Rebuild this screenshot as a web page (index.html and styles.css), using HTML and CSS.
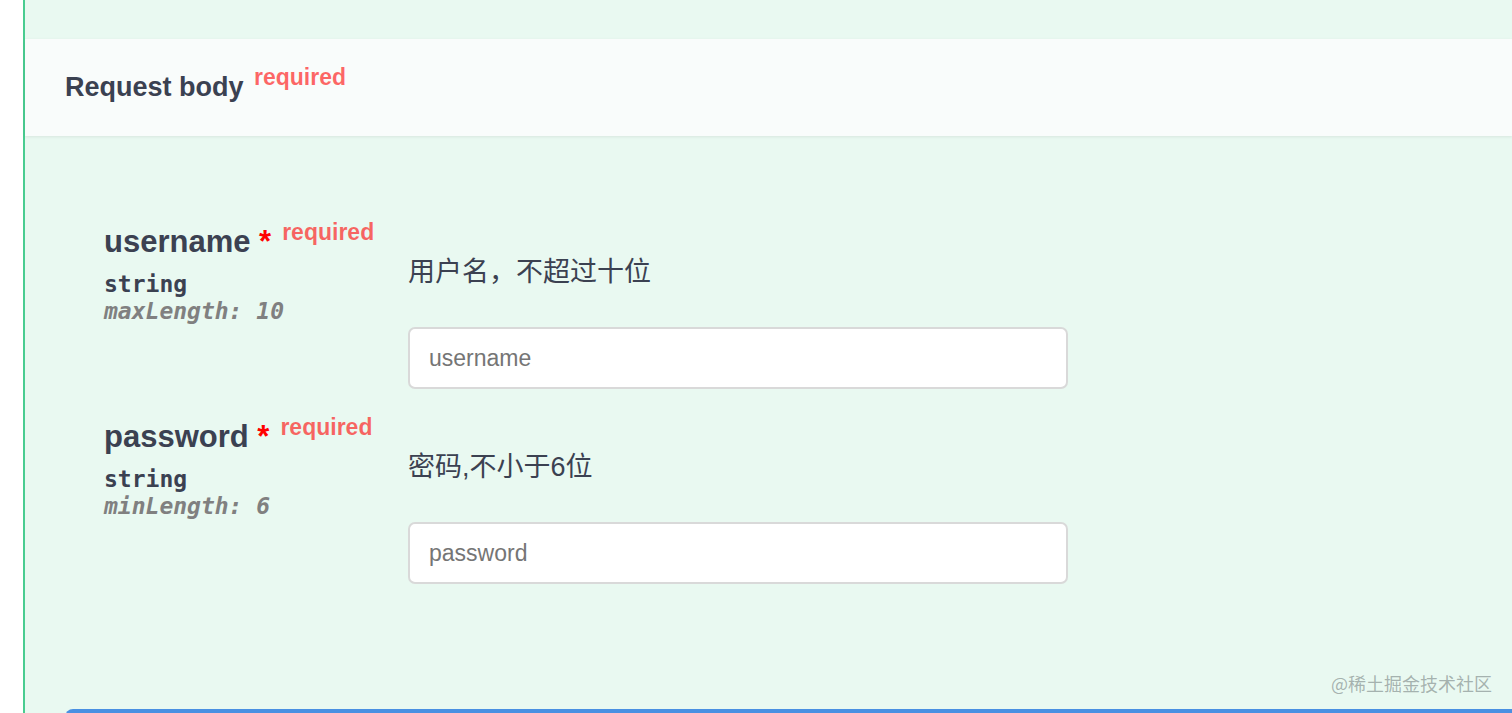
FILE: index.html
```html
<!DOCTYPE html>
<html lang="zh-CN">
<head>
    <meta charset="UTF-8">
    <meta name="viewport" content="width=device-width, initial-scale=1.0">
    <title>Request body</title>
    <link rel="stylesheet" href="styles.css">
</head>
<body>
    <div class="page">
        <div class="opblock">
            <div class="section-header">
                <h4>Request body <span class="header-required">required</span></h4>
            </div>

            <div class="body-params">
                <div class="param-row">
                    <div class="param-info">
                        <div class="param-name">username<span class="star"> *</span><span class="name-required">required</span></div>
                        <div class="param-type">string</div>
                        <div class="param-ext">maxLength: 10</div>
                    </div>
                    <div class="param-desc">
                        <p>用户名，不超过十位</p>
                        <input type="text" placeholder="username">
                    </div>
                </div>

                <div class="param-row">
                    <div class="param-info">
                        <div class="param-name">password<span class="star"> *</span><span class="name-required">required</span></div>
                        <div class="param-type">string</div>
                        <div class="param-ext">minLength: 6</div>
                    </div>
                    <div class="param-desc">
                        <p>密码,不小于6位</p>
                        <input type="text" placeholder="password">
                    </div>
                </div>
            </div>

            <div class="execute-bar"></div>
        </div>
    </div>

    <div class="watermark">@稀土掘金技术社区</div>
</body>
</html>
```

FILE: styles.css
```css
* {
    margin: 0;
    padding: 0;
    box-sizing: border-box;
}

body {
    background-color: #ffffff;
    font-family: "Liberation Sans", Arial, "Noto Sans CJK SC", sans-serif;
    color: #3b4151;
    overflow: hidden;
}

.page {
    padding-left: 23px;
}

.opblock {
    border-left: 2px solid #49cc90;
    background-color: #e9f9f1;
    padding-top: 39px;
    min-height: 713px;
}

.section-header {
    display: flex;
    align-items: center;
    height: 97px;
    padding-left: 40px;
    background-color: #f9fcfb;
    box-shadow: 0 1px 3px rgba(0, 0, 0, 0.08);
}

.section-header h4 {
    font-size: 27px;
    font-weight: bold;
    line-height: 31px;
}

.header-required {
    font-size: 23px;
    color: rgba(255, 0, 0, 0.6);
    vertical-align: 11px;
    line-height: 0;
    margin-left: 3px;
}

.body-params {
    padding: 88px 0 95px 79px;
}

.param-row {
    display: grid;
    grid-template-columns: 304px 660px;
    height: 195px;
}

.param-name {
    font-size: 31px;
    font-weight: bold;
    line-height: 36px;
}

.star {
    color: red;
}

.name-required {
    font-size: 23px;
    color: rgba(255, 0, 0, 0.6);
    vertical-align: 12px;
    line-height: 0;
    padding-left: 11px;
}

.param-type,
.param-ext {
    font-family: "DejaVu Sans Mono", "Liberation Mono", monospace;
    font-size: 23px;
    font-weight: bold;
    line-height: 27px;
}

.param-type {
    margin-top: 11px;
}

.param-ext {
    color: #808080;
    font-style: italic;
}

.param-desc {
    padding-top: 30px;
}

.param-desc p {
    font-family: "Liberation Sans", "Noto Sans CJK SC", sans-serif;
    font-size: 27px;
    line-height: 36px;
}

.param-desc input {
    display: block;
    width: 660px;
    height: 62px;
    margin-top: 37px;
    padding: 0 19px;
    border: 2px solid #d9d9d9;
    border-radius: 7px;
    background-color: #ffffff;
    font-family: "Liberation Sans", Arial, sans-serif;
    font-size: 23px;
    color: #3b4151;
    outline: none;
}

.param-desc input::placeholder {
    color: #757575;
}

.execute-bar {
    margin-left: 40px;
    height: 20px;
    background-color: #4990e2;
    border-radius: 8px 0 0 0;
}

.watermark {
    position: absolute;
    right: 20px;
    bottom: 18px;
    font-family: "Noto Sans CJK SC", sans-serif;
    font-size: 18px;
    line-height: 24px;
    color: rgba(120, 130, 130, 0.6);
}
```
